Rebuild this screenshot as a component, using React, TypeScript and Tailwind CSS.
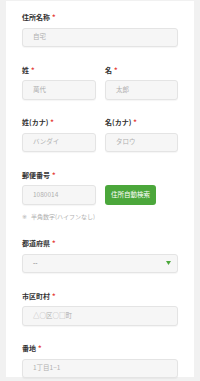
import React from "react";

const Req = () => <span className="ml-[2px] text-[#e53935]">*</span>;

const Label: React.FC<{ text: string }> = ({ text }) => (
  <div className="h-[10px] leading-[10px] text-[7px] font-bold text-[#333] mb-[5.5px]">
    {text}
    <Req />
  </div>
);

const Input: React.FC<{ placeholder: string; className?: string }> = ({
  placeholder,
  className = "",
}) => (
  <div
    className={`h-[19.5px] flex items-center px-[10px] rounded-[3px] border border-[#e4e4e4] bg-[#f6f6f6] shadow-[0_1px_1px_rgba(0,0,0,0.04)] text-[6.5px] text-[#b0b0b0] ${className}`}
  >
    {placeholder}
  </div>
);

const App: React.FC = () => {
  return (
    <div
      className="w-[200px] h-[381px] overflow-hidden bg-[#f1f1f1] px-[6px] pt-[1px]"
      style={{ fontFamily: '"Noto Sans CJK JP", "Noto Sans", sans-serif' }}
    >
      <div className="bg-white h-[376px] px-[16px] pt-[11px] flex flex-col gap-[17.5px]">
        <div>
          <Label text="住所名称" />
          <Input placeholder="自宅" />
        </div>

        <div className="flex gap-[9px]">
          <div className="w-[74px]">
            <Label text="姓" />
            <Input placeholder="萬代" />
          </div>
          <div className="flex-1">
            <Label text="名" />
            <Input placeholder="太郎" />
          </div>
        </div>

        <div className="flex gap-[9px]">
          <div className="w-[74px]">
            <Label text="姓(カナ)" />
            <Input placeholder="バンダイ" />
          </div>
          <div className="flex-1">
            <Label text="名(カナ)" />
            <Input placeholder="タロウ" />
          </div>
        </div>

        <div>
          <Label text="郵便番号" />
          <div className="flex gap-[9px]">
            <Input placeholder="1080014" className="w-[74px]" />
            <button
              type="button"
              className="h-[19.5px] w-[51px] rounded-[3px] bg-[#4ba73b] text-white text-[6.5px] flex items-center justify-center"
            >
              住所自動検索
            </button>
          </div>
          <div className="mt-[8px] h-[8px] leading-[8px] text-[6px] text-[#b0b0b0] flex gap-[4px]">
            <span style={{ fontFamily: '"DejaVu Sans", sans-serif' }}>※</span>
            <span>半角数字(ハイフンなし)</span>
          </div>
        </div>

        <div>
          <Label text="都道府県" />
          <div className="h-[19.5px] flex items-center justify-between pl-[10px] pr-[6px] rounded-[3px] border border-[#e4e4e4] bg-[#f6f6f6] shadow-[0_1px_1px_rgba(0,0,0,0.04)] text-[6.5px] text-[#666]">
            <span>--</span>
            <svg width="5" height="4" viewBox="0 0 5 4">
              <path d="M0 0 H5 L2.5 4 Z" fill="#4ba73b" />
            </svg>
          </div>
        </div>

        <div>
          <Label text="市区町村" />
          <Input placeholder="△○区○□町" />
        </div>

        <div>
          <Label text="番地" />
          <Input placeholder="1丁目1−1" />
        </div>
      </div>
    </div>
  );
};

export default App;
